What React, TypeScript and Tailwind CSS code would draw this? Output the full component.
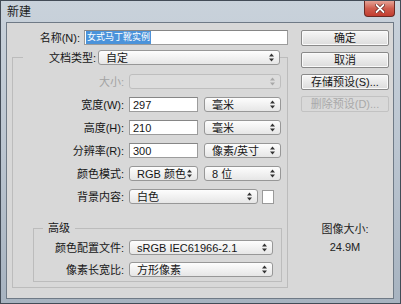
import type { ReactNode } from 'react';

const Arrows = ({ dim = false }: { dim?: boolean }) => (
  <svg width="5" height="9" viewBox="0 0 5 9" className={dim ? 'text-[#a8a8a8]' : 'text-[#333]'}>
    <path d="M2.5 0.5L5 3.5H0Z M0 5.5H5L2.5 8.5Z" fill="currentColor" />
  </svg>
);

function Select({ value, className = '', dim = false }: { value?: string; className?: string; dim?: boolean }) {
  return (
    <div
      className={`flex h-[15px] shrink-0 items-center justify-between rounded-[3px] border pl-[7px] pr-[5px] ${
        dim
          ? 'border-[#bebebe] bg-[#dcdcdc]'
          : 'border-[#979797] bg-linear-to-b from-[#fdfdfd] to-[#e6e6e6]'
      } ${className}`}
    >
      <span className="whitespace-nowrap">{value}</span>
      <Arrows dim={dim} />
    </div>
  );
}

function Input({ value, className = '' }: { value: string; className?: string }) {
  return (
    <div className={`flex h-[15px] shrink-0 items-center border border-[#9c9c9c] border-t-[#868686] bg-white pl-[3px] ${className}`}>
      {value}
    </div>
  );
}

function Row({ label, w, children, dim = false }: { label: string; w: string; children?: ReactNode; dim?: boolean }) {
  return (
    <div className="flex h-[15px] items-center">
      <span className={`${w} shrink-0 whitespace-nowrap pr-[5px] text-right ${dim ? 'text-[#a3a3a3]' : ''}`}>{label}</span>
      {children}
    </div>
  );
}

function Btn({ children, dim = false }: { children: ReactNode; dim?: boolean }) {
  return (
    <div
      className={`flex h-[16px] w-[88px] items-center justify-center rounded-[2px] border ${
        dim
          ? 'border-[#c2c2c2] bg-[#d9d9d9] text-[#a9a9a9]'
          : 'border-[#8a8a8a] bg-linear-to-b from-[#f7f7f7] to-[#dcdcdc] shadow-[inset_0_0_0_1px_#fafafa]'
      }`}
    >
      {children}
    </div>
  );
}

export default function App() {
  return (
    <div className="flex h-[304px] w-[401px] flex-col overflow-hidden border border-[#434c57] bg-linear-to-b from-[#c9d2db] via-[#bbc5d0] to-[#a7b3c0] font-['Liberation_Sans','Noto_Sans_CJK_SC',sans-serif] text-[11px] leading-[14px] text-[#161616]">
      {/* title bar */}
      <div className="flex h-[21px] shrink-0 items-start justify-between pl-[6px] pr-[5px]">
        <span className="mt-[4px] text-[12px] text-[#1d1d1d]">新建</span>
        <div className="flex h-[16px] w-[31px] items-center justify-center rounded-b-[4px] border border-t-0 border-[#6a2a24] bg-linear-to-b from-[#e4a296] via-[#cf5c4d] to-[#c23d30]">
          <svg width="10" height="9" viewBox="0 0 10 9">
            <path d="M1.5 1L8.5 8M8.5 1L1.5 8" stroke="#5a1f1a" strokeWidth="3.2" strokeLinecap="round" />
            <path d="M1.5 1L8.5 8M8.5 1L1.5 8" stroke="#fff" strokeWidth="1.8" strokeLinecap="round" />
          </svg>
        </div>
      </div>

      {/* client area */}
      <div className="mb-[4px] ml-[5px] flex w-[388px] flex-1 border border-[#6f7a86] bg-[#d8d8d8]">
        {/* left column */}
        <div className="flex w-[281px] shrink-0 flex-col pt-[7px]">
          <div className="flex h-[15px] items-center">
            <span className="w-[73px] shrink-0 text-right">名称(N):</span>
            <div className="ml-[4px] flex h-[15px] w-[204px] items-center border border-[#9c9c9c] border-t-[#868686] bg-white pl-[1px]">
              <span className="bg-[#4b93da] px-[1px] text-[9px] leading-[13px] text-white">女式马丁靴实例</span>
            </div>
          </div>

          <fieldset className="ml-[5px] mt-[5px] w-[276px] border border-[#bcbcbc] pb-[5px] pl-[10px]">
            <legend>
              <div className="flex h-[15px] items-center">
                <span className="w-[75px] shrink-0 pr-[2px] text-right">文档类型:</span>
                <Select value="自定" className="w-[182px]" />
              </div>
            </legend>

            <div className="flex flex-col gap-[8px] pt-[9px]">
              <Row label="大小:" w="w-[106px]" dim>
                <Select className="w-[152px]" dim />
              </Row>
              <Row label="宽度(W):" w="w-[106px]">
                <Input value="297" className="w-[69px]" />
                <Select value="毫米" className="ml-[6px] w-[77px]" />
              </Row>
              <Row label="高度(H):" w="w-[106px]">
                <Input value="210" className="w-[69px]" />
                <Select value="毫米" className="ml-[6px] w-[77px]" />
              </Row>
              <Row label="分辨率(R):" w="w-[106px]">
                <Input value="300" className="w-[69px]" />
                <Select value="像素/英寸" className="ml-[6px] w-[77px]" />
              </Row>
              <Row label="颜色模式:" w="w-[106px]">
                <Select value="RGB 颜色" className="w-[69px]" />
                <Select value="8 位" className="ml-[6px] w-[77px]" />
              </Row>
              <Row label="背景内容:" w="w-[106px]">
                <Select value="白色" className="w-[129px]" />
                <div className="ml-[4px] h-[14px] w-[12px] border border-[#9a9a9a] bg-white" />
              </Row>
            </div>

            <fieldset className="ml-[10px] mt-[17px] w-[249px] border border-[#bcbcbc] pb-[4px] pl-[9px]">
              <legend className="px-[5px]">高级</legend>
              <div className="flex flex-col gap-[7px] pt-[5px]">
                <Row label="颜色配置文件:" w="w-[86px]">
                  <Select value="sRGB IEC61966-2.1" className="w-[144px]" />
                </Row>
                <Row label="像素长宽比:" w="w-[86px]">
                  <Select value="方形像素" className="w-[144px]" />
                </Row>
              </div>
            </fieldset>
          </fieldset>
        </div>

        {/* right column */}
        <div className="ml-[13px] flex w-[88px] flex-col pt-[7px]">
          <div className="flex flex-col gap-[6px]">
            <Btn>确定</Btn>
            <Btn>取消</Btn>
            <Btn>存储预设(S)...</Btn>
            <Btn dim>删除预设(D)...</Btn>
          </div>
          <div className="mt-[110px] flex flex-col items-center gap-[4px] text-[#222]">
            <span>图像大小:</span>
            <span>24.9M</span>
          </div>
        </div>
      </div>
    </div>
  );
}
